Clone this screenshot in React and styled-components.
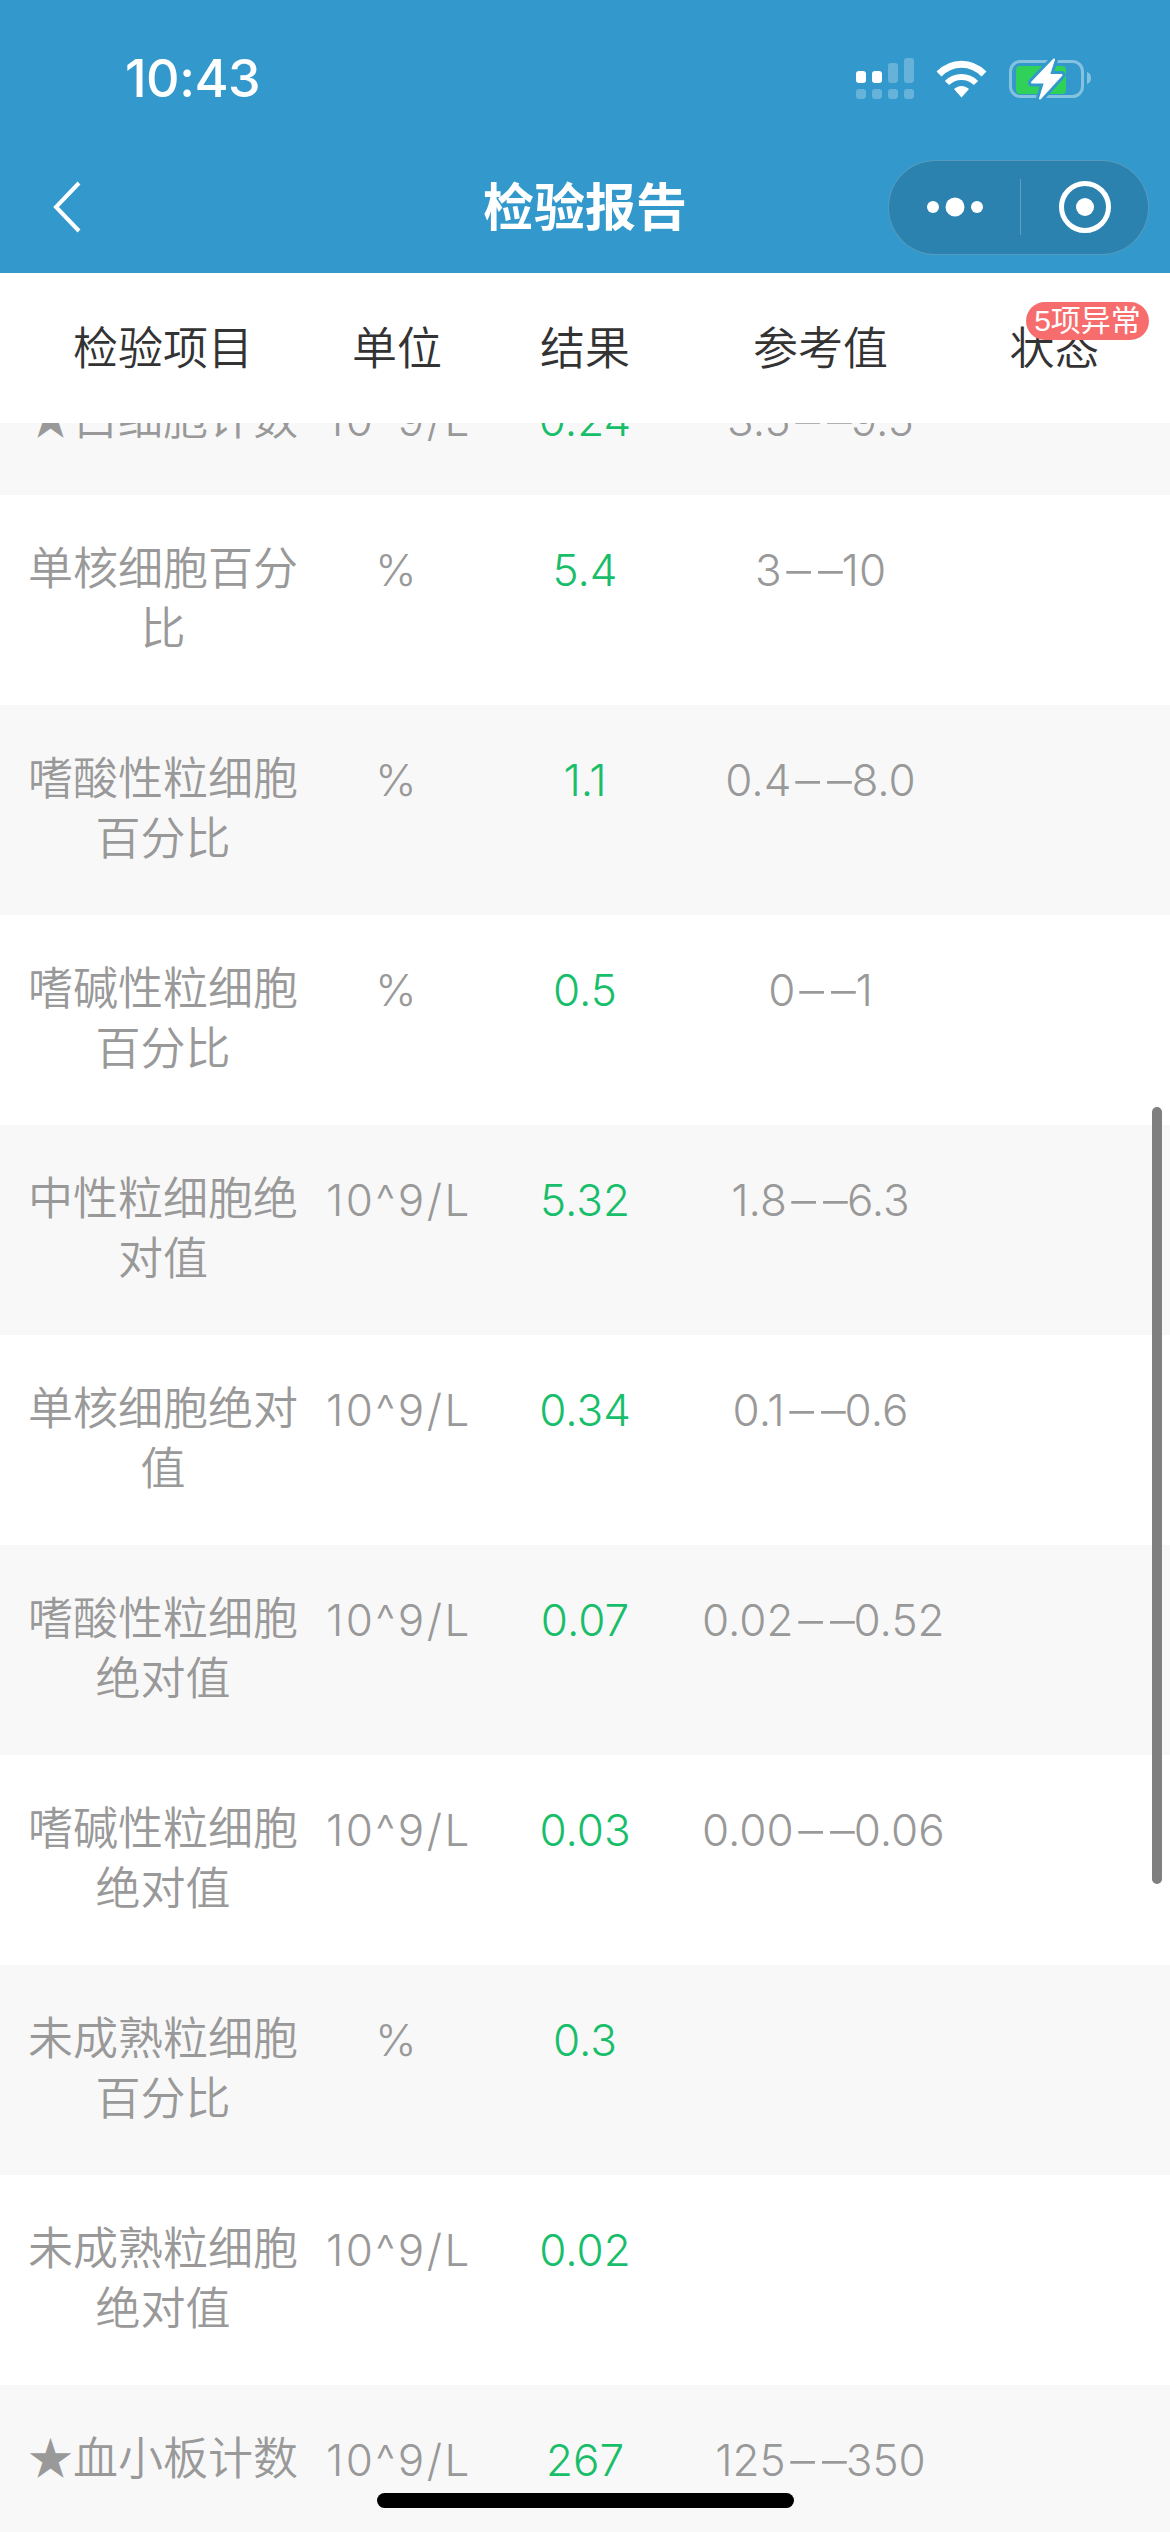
import React from "react";
import styled, { createGlobalStyle } from "styled-components";

const COLUMNS = "326px 142px 234px 237px 231px";
const BOLT = "M45 1.5 L23 24.5 L36 24.5 L31 40.5 L52.5 17 L40 17 Z";

const rows = [
  { name: "★白细胞计数", unit: "10^9/L", result: "0.24", ref: "3.5--9.5" },
  { name: "单核细胞百分比", unit: "%", result: "5.4", ref: "3--10" },
  { name: "嗜酸性粒细胞百分比", unit: "%", result: "1.1", ref: "0.4--8.0" },
  { name: "嗜碱性粒细胞百分比", unit: "%", result: "0.5", ref: "0--1" },
  { name: "中性粒细胞绝对值", unit: "10^9/L", result: "5.32", ref: "1.8--6.3" },
  { name: "单核细胞绝对值", unit: "10^9/L", result: "0.34", ref: "0.1--0.6" },
  { name: "嗜酸性粒细胞绝对值", unit: "10^9/L", result: "0.07", ref: "0.02--0.52" },
  { name: "嗜碱性粒细胞绝对值", unit: "10^9/L", result: "0.03", ref: "0.00--0.06" },
  { name: "未成熟粒细胞百分比", unit: "%", result: "0.3", ref: "" },
  { name: "未成熟粒细胞绝对值", unit: "10^9/L", result: "0.02", ref: "" },
  { name: "★血小板计数", unit: "10^9/L", result: "267", ref: "125--350" },
];

const RefRange = ({ value }) => {
  if (!value) return null;
  const [low, high] = value.split("--");
  return (
    <>
      {low}
      <Dash>--</Dash>
      {high}
    </>
  );
};

const App = () => {
  return (
    <Page>
      <GlobalStyle />
      <StatusBar>
        <Time>10:43</Time>
        <StatusIcons>
          <svg width="58" height="41" viewBox="0 0 58 41" fill="#fff">
            <rect x="0" y="13" width="10" height="12" rx="3" />
            <rect x="16" y="13" width="10" height="12" rx="3" />
            <rect x="32" y="5" width="10" height="20" rx="3" opacity="0.25" />
            <rect x="48" y="0" width="10" height="25" rx="3" opacity="0.25" />
            <rect x="0" y="31" width="10" height="10" rx="3" opacity="0.25" />
            <rect x="16" y="31" width="10" height="10" rx="3" opacity="0.25" />
            <rect x="32" y="31" width="10" height="10" rx="3" opacity="0.25" />
            <rect x="48" y="31" width="10" height="10" rx="3" opacity="0.25" />
          </svg>
          <svg width="51" height="38" viewBox="0 0 51 38" fill="none" stroke="#fff">
            <path d="M3 14 C16 1 35 1 48 14" strokeWidth="7" />
            <path d="M11 23 C19 15 32 15 40 23" strokeWidth="6" />
            <path d="M18 29 L25.5 37.5 L33 29 C28 25 23 25 18 29 Z" fill="#fff" stroke="none" />
          </svg>
          <svg width="83" height="42" viewBox="0 0 83 42">
            <rect x="1.5" y="3.5" width="72" height="35" rx="10" fill="none" stroke="#fff" strokeOpacity="0.4" strokeWidth="3" />
            <rect x="7" y="8" width="50" height="28" rx="4" fill="#30d158" />
            <path d="M78 14 C81 15 82 17 82 20 C82 23 81 25 78 26 Z" fill="#fff" opacity="0.4" />
            <path d={BOLT} fill="#3399cc" stroke="#3399cc" strokeWidth="8" strokeLinejoin="round" />
            <path d={BOLT} fill="#fff" stroke="#fff" strokeWidth="2" strokeLinejoin="round" />
          </svg>
        </StatusIcons>
      </StatusBar>
      <NavBar>
        <BackButton>
          <svg width="30" height="52" viewBox="0 0 30 52" fill="none" stroke="#fff" strokeWidth="4">
            <path d="M27 2 L4 26 L27 50" />
          </svg>
        </BackButton>
        <Title>检验报告</Title>
        <CapsuleSlot>
          <Capsule>
            <CapsuleHalf>
              <svg width="58" height="20" viewBox="0 0 58 20" fill="#fff">
                <circle cx="6" cy="10" r="6" />
                <circle cx="28" cy="10" r="9.5" />
                <circle cx="50" cy="10" r="6" />
              </svg>
            </CapsuleHalf>
            <CapsuleDivider />
            <CapsuleHalf>
              <svg width="52" height="52" viewBox="0 0 52 52">
                <circle cx="26" cy="26" r="23.5" fill="none" stroke="#fff" strokeWidth="5" />
                <circle cx="26" cy="26" r="9" fill="#fff" />
              </svg>
            </CapsuleHalf>
          </Capsule>
        </CapsuleSlot>
      </NavBar>
      <TableHead>
        <HeadCell>检验项目</HeadCell>
        <HeadCell>单位</HeadCell>
        <HeadCell>结果</HeadCell>
        <HeadCell>参考值</HeadCell>
        <HeadCell>状态</HeadCell>
        <AbnormalBadge>5项异常</AbnormalBadge>
      </TableHead>
      <ScrollArea>
        <RowList>
          {rows.map((row, index) => (
            <Row key={index} $striped={index % 2 === 0}>
              <NameCell>{row.name}</NameCell>
              <UnitCell>{row.unit}</UnitCell>
              <ResultCell>{row.result}</ResultCell>
              <NumberCell>
                <RefRange value={row.ref} />
              </NumberCell>
              <Cell />
            </Row>
          ))}
        </RowList>
        <ScrollThumb />
      </ScrollArea>
      <HomeIndicator />
    </Page>
  );
};
export default App;

const GlobalStyle = createGlobalStyle`
  html, body {
    margin: 0;
    padding: 0;
    background: #fff;
  }
  * {
    box-sizing: border-box;
  }
`;

const Page = styled.div`
  position: relative;
  width: 1170px;
  height: 2532px;
  overflow: hidden;
  display: flex;
  flex-direction: column;
  font-family: "Liberation Sans", "Noto Sans CJK SC", sans-serif;
  font-weight: 350;
`;

const StatusBar = styled.div`
  height: 141px;
  padding: 16px 78px 0 125px;
  background: #3399cc;
  display: flex;
  justify-content: space-between;
  align-items: center;
  color: #fff;
`;

const Time = styled.div`
  font-family: Inter, "Liberation Sans", sans-serif;
  font-size: 52px;
  font-weight: 500;
  letter-spacing: -0.5px;
`;

const StatusIcons = styled.div`
  display: flex;
  align-items: center;
  gap: 22px;
`;

const NavBar = styled.div`
  height: 132px;
  padding: 0 21px 6px;
  background: #3399cc;
  display: grid;
  grid-template-columns: 1fr auto 1fr;
  align-items: center;
`;

const BackButton = styled.div`
  display: flex;
  justify-self: start;
  padding: 6px 0 0 31px;
`;

const Title = styled.div`
  font-size: 51px;
  font-weight: 700;
  color: #fff;
  text-align: center;
`;

const CapsuleSlot = styled.div`
  display: flex;
  justify-content: flex-end;
  padding-top: 6px;
`;

const Capsule = styled.div`
  width: 261px;
  height: 95px;
  padding-left: 4px;
  border-radius: 48px;
  background: #2b82ae;
  border: 1.5px solid rgba(255, 255, 255, 0.2);
  display: flex;
  align-items: center;
`;

const CapsuleHalf = styled.div`
  flex: 1;
  display: flex;
  justify-content: center;
  align-items: center;
`;

const CapsuleDivider = styled.div`
  width: 1.5px;
  height: 56px;
  background: rgba(255, 255, 255, 0.25);
`;

const TableHead = styled.div`
  position: relative;
  z-index: 2;
  height: 150px;
  background: #fff;
  display: grid;
  grid-template-columns: ${COLUMNS};
  align-items: center;
`;

const HeadCell = styled.div`
  font-size: 45px;
  line-height: 60px;
  color: #333;
  text-align: center;
  padding-top: 3px;
`;

const AbnormalBadge = styled.div`
  position: absolute;
  left: 1026px;
  top: 29px;
  width: 123px;
  height: 38px;
  border-radius: 19px;
  background: #f76d6d;
  color: #fff;
  font-size: 30px;
  font-weight: 400;
  line-height: 38px;
  text-align: center;
  white-space: nowrap;
`;

const ScrollArea = styled.div`
  position: relative;
  flex: 1;
  overflow: hidden;
`;

// the list is scrolled: the first row sits partly under the table head
const RowList = styled.div`
  margin-top: -78px;
`;

const Row = styled.div`
  display: grid;
  grid-template-columns: ${COLUMNS};
  padding: 45px 0;
  background: ${(props) => (props.$striped ? "#f8f8f8" : "#fff")};
`;

const Cell = styled.div`
  font-size: 45px;
  line-height: 60px;
  color: #999;
  text-align: center;
`;

const NameCell = styled(Cell)`
  padding: 0 25px;
`;

const NumberCell = styled(Cell)`
  font-family: Inter, "Liberation Sans", sans-serif;
  font-size: 44px;
  font-weight: 300;
  white-space: nowrap;
  font-feature-settings: "calt" 0;
`;

const UnitCell = styled(NumberCell)`
  letter-spacing: 2.5px;
`;

const ResultCell = styled(NumberCell)`
  color: #19be6b;
`;

// the hyphens in the reference are long, stretch them
const Dash = styled.span`
  display: inline-block;
  width: 60px;
  text-align: center;
  letter-spacing: -2.7px;
  transform: scaleX(1.85);
`;

const ScrollThumb = styled.div`
  position: absolute;
  right: 8px;
  top: 684px;
  width: 10px;
  height: 777px;
  border-radius: 5px;
  background: #7f7f7f;
`;

const HomeIndicator = styled.div`
  position: absolute;
  left: 377px;
  bottom: 24px;
  width: 417px;
  height: 15px;
  border-radius: 8px;
  background: #000;
`;
